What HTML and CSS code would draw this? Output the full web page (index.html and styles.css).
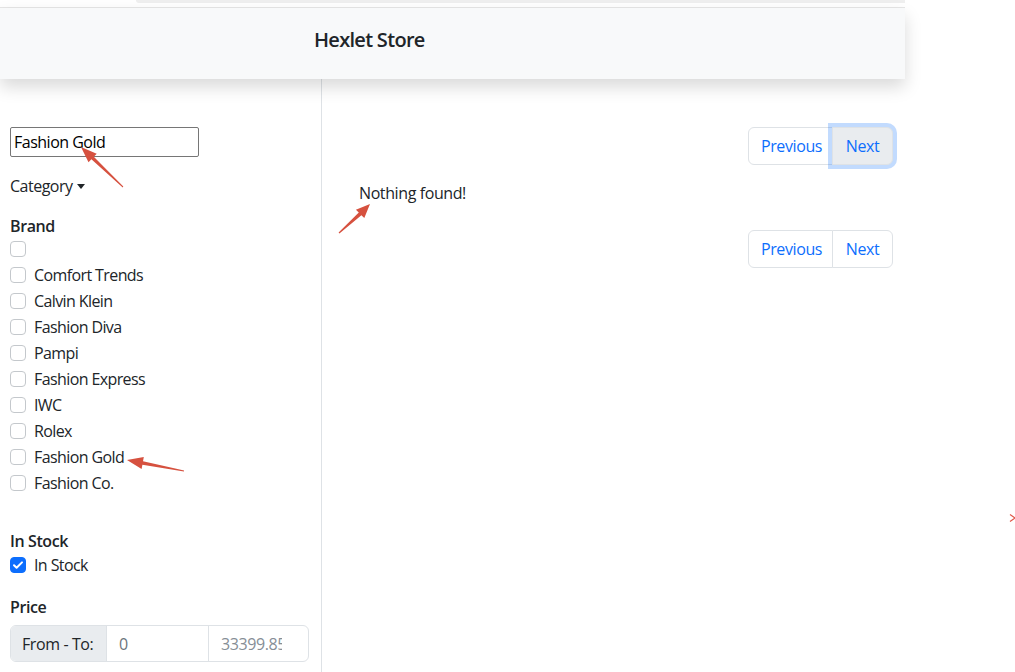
FILE: index.html
```html
<!DOCTYPE html>
<html lang="en">
<head>
<meta charset="utf-8">
<title>Hexlet Store</title>
<link rel="stylesheet" href="styles.css">
</head>
<body>
<div class="page">
  <div class="topbar"><div class="topbar-tab"></div></div>
  <header class="navbar">
    <span class="brand">Hexlet Store</span>
  </header>
  <div class="layout">
    <aside class="sidebar">
      <input class="search" type="text" value="Fashion Gold">
      <div class="category">Category <span class="caret"></span></div>
      <div class="group-label">Brand</div>
      <div class="brand-list">
        <label class="check"><span class="box"></span><span class="check-text"></span></label>
        <label class="check"><span class="box"></span><span class="check-text">Comfort Trends</span></label>
        <label class="check"><span class="box"></span><span class="check-text">Calvin Klein</span></label>
        <label class="check"><span class="box"></span><span class="check-text">Fashion Diva</span></label>
        <label class="check"><span class="box"></span><span class="check-text">Pampi</span></label>
        <label class="check"><span class="box"></span><span class="check-text">Fashion Express</span></label>
        <label class="check"><span class="box"></span><span class="check-text">IWC</span></label>
        <label class="check"><span class="box"></span><span class="check-text">Rolex</span></label>
        <label class="check"><span class="box"></span><span class="check-text">Fashion Gold</span></label>
        <label class="check"><span class="box"></span><span class="check-text">Fashion Co.</span></label>
      </div>
      <div class="group-label stock-label">In Stock</div>
      <label class="check"><span class="box checked"><svg viewBox="0 0 16 16" width="16" height="16"><path d="M4 8.2l2.6 2.6L12 5.4" fill="none" stroke="#fff" stroke-width="2" stroke-linecap="round" stroke-linejoin="round"/></svg></span><span class="check-text">In Stock</span></label>
      <div class="group-label price-label">Price</div>
      <div class="input-group">
        <span class="addon">From - To:</span>
        <span class="field">0</span>
        <span class="field muted"><span class="clip">33399.85</span></span>
      </div>
    </aside>
    <main class="content">
      <nav class="pager">
        <span class="page-link first">Previous</span>
        <span class="page-link last focused">Next</span>
      </nav>
      <p class="empty">Nothing found!</p>
      <nav class="pager">
        <span class="page-link first">Previous</span>
        <span class="page-link last">Next</span>
      </nav>
    </main>
  </div>
</div>
<svg class="annotations" width="1015" height="672" viewBox="0 0 1015 672">
  <polygon fill="#d6513f" points="123.3,186.6 93.8,156.7 96.7,153.7 81,147 88.5,162.3 91.4,159.3 122.7,187.4"/>
  <polygon fill="#d6513f" points="339.4,233.4 361.4,215.2 364.3,218.1 370,204 355.9,209.7 358.8,212.6 338.6,232.6"/>
  <polygon fill="#d6513f" points="184.1,470.5 143.0,461.2 143.8,457.1 127,460 141.6,468.9 142.4,464.8 183.9,471.5"/>
  <path d="M1010 514.5 L1015 518 L1010 521.5" fill="none" stroke="#e0584a" stroke-width="1.2"/>
</svg>
</body>
</html>
```

FILE: styles.css
```css
* { box-sizing: border-box; }
html, body { margin: 0; padding: 0; background: #fff; }
body {
  font-family: "Open Sans", "Noto Sans", "Liberation Sans", sans-serif;
  font-size: 16px;
  line-height: 24px;
  color: #212529;
  width: 1015px;
  height: 672px;
  overflow: hidden;
  position: relative;
}
.page { width: 905px; height: 672px; }
.topbar { height: 8px; display: flex; justify-content: flex-end; border-bottom: 1px solid #e6e6e6; }
.topbar-tab { width: 769px; height: 3px; background: #efefef; border-bottom-left-radius: 4px; }
.navbar {
  height: 71px;
  background: #f8f9fa;
  display: flex;
  align-items: center;
  padding-left: 314px;
  padding-bottom: 7px;
  box-shadow: 0 8px 16px rgba(0, 0, 0, 0.15);
  position: relative;
  z-index: 2;
}
.brand { font-size: 20px; font-weight: 600; color: #212529; letter-spacing: -0.7px; }
.layout { display: flex; height: 593px; }
.sidebar {
  width: 322px;
  border-right: 1px solid #dee2e6;
  padding: 48px 12px 0 10px;
  display: flex;
  flex-direction: column;
  align-items: flex-start;
}
.search {
  width: 189px;
  height: 30px;
  border: 1px solid #767676;
  border-radius: 2px;
  padding: 1px 3px;
  font: inherit;
  color: #000;
  letter-spacing: -0.5px;
  outline: none;
}
.category { margin-top: 17px; letter-spacing: -0.5px; display: flex; align-items: center; }
.caret {
  display: inline-block;
  margin-left: 4px;
  border-top: 5px solid #212529;
  border-left: 4px solid transparent;
  border-right: 4px solid transparent;
}
.group-label { font-weight: 600; margin-top: 16px; letter-spacing: -0.4px; }
.brand-list { margin-top: -1px; display: flex; flex-direction: column; }
.stock-label { margin-top: 32px; }
.price-label { margin-top: 16px; margin-bottom: 6px; }
.check { display: flex; align-items: center; height: 26px; padding-bottom: 2px; letter-spacing: -0.6px; }
.box {
  width: 16px;
  height: 16px;
  border: 1px solid #c4c8cc;
  border-radius: 4px;
  background: #fff;
  margin-right: 8px;
  display: flex;
}
.box.checked { background: #0d6efd; border-color: #0d6efd; }
.box.checked svg { margin: -1px; }
.input-group {
  display: flex;
  width: 299px;
  height: 37px;
  border: 1px solid #dee2e6;
  border-radius: 6px;
  overflow: hidden;
}
.addon {
  width: 96px;
  background: #e9ecef;
  border-right: 1px solid #dee2e6;
  padding: 6px 11px;
  letter-spacing: -0.4px;
  white-space: nowrap;
}
.field {
  width: 101px;
  padding: 6px 12px;
  overflow: hidden;
  white-space: nowrap;
  color: #6c757d;
  letter-spacing: -0.4px;
}
.field + .field {
  border-left: 1px solid #dee2e6;
  flex: 1;
}
.clip { display: block; width: 61px; overflow: hidden; white-space: nowrap; }
.field.muted { color: #868e96; }
.content { flex: 1; padding: 48px 12px 0 37px; }
.pager { display: flex; justify-content: flex-end; }
.page-link {
  display: block;
  height: 38px;
  padding: 6px 12px;
  border: 1px solid #dee2e6;
  color: #0d6efd;
  background: #fff;
  letter-spacing: -0.4px;
}
.page-link.first { border-radius: 6px 0 0 6px; width: 85px; text-align: center; }
.page-link.last { border-radius: 0 6px 6px 0; margin-left: -1px; width: 61px; text-align: center; }
.page-link.focused {
  background: #e9ecef;
  box-shadow: 0 0 0 4px rgba(13, 110, 253, 0.25);
  position: relative;
  z-index: 1;
}
.empty { margin: 16px 0 25px; letter-spacing: -0.4px; }
.annotations { position: absolute; left: 0; top: 0; pointer-events: none; z-index: 5; }
```
